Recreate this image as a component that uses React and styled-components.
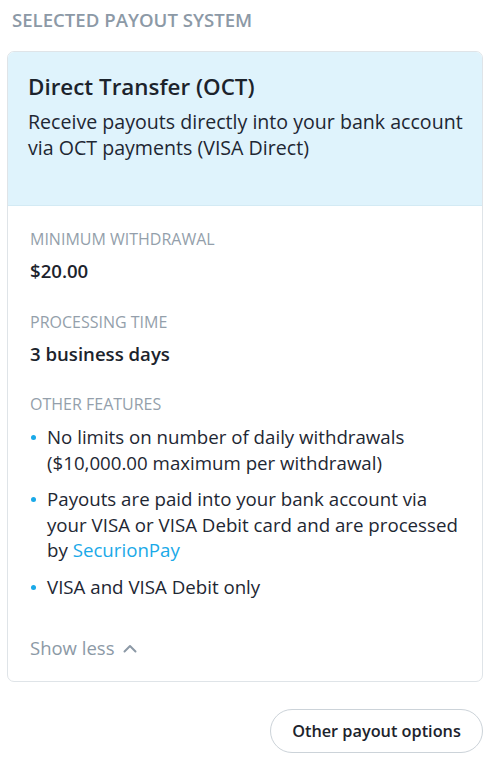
import React from 'react';
import styled, { createGlobalStyle } from 'styled-components';

const GlobalStyle = createGlobalStyle`
  body {
    margin: 0;
    background: #ffffff;
    font-family: 'Open Sans', 'Liberation Sans', sans-serif;
    color: #1e2733;
  }
`;

const Page = styled.div`
  padding: 8px 12px 8px 7px;
`;

const Heading = styled.h2`
  margin: 0 0 19px 5px;
  font-size: 18.6px;
  line-height: 24px;
  font-weight: 600;
  color: #8c99a6;
  text-transform: uppercase;
`;

const Card = styled.div`
  border: 1px solid #dfe4e8;
  border-radius: 7px;
  overflow: hidden;
`;

const CardHead = styled.div`
  background: #dff3fc;
  border-bottom: 1px solid #d3eaf4;
  padding: 20px 14px 44px 20px;
`;

const Title = styled.h3`
  margin: 0 0 7px;
  font-size: 22.4px;
  line-height: 30px;
  font-weight: 600;
  color: #1c232c;
`;

const Description = styled.p`
  margin: 0;
  font-size: 19.6px;
  line-height: 26px;
  color: #1e2733;
`;

const CardBody = styled.div`
  padding: 22px 15px 20px 22px;
`;

const Label = styled.div`
  font-size: 16px;
  line-height: 22px;
  color: #949fab;
  text-transform: uppercase;
  margin-top: ${p => (p.$first ? '0' : '26.5px')};
`;

const Value = styled.div`
  margin-top: 8px;
  font-size: 18.6px;
  line-height: 26px;
  font-weight: 600;
  color: #1c232c;
`;

const Features = styled.ul`
  list-style: none;
  margin: 9px 0 0;
  padding: 0;
  display: flex;
  flex-direction: column;
  gap: 11px;
`;

const Feature = styled.li`
  position: relative;
  padding-left: 17px;
  font-size: 18.7px;
  line-height: 25.5px;
  color: #1e2733;

  &::before {
    content: '';
    position: absolute;
    left: 1px;
    top: 11px;
    width: 5px;
    height: 5px;
    border-radius: 50%;
    background: #1aa9e8;
  }
`;

const LinkText = styled.a`
  color: #1aa9e8;
  text-decoration: none;
`;

const ShowLess = styled.button`
  margin-top: 36px;
  display: flex;
  align-items: center;
  gap: 9px;
  padding: 0;
  border: none;
  background: none;
  font-family: inherit;
  font-size: 18.5px;
  line-height: 26px;
  color: #8c99a6;
  cursor: pointer;
`;

const Footer = styled.div`
  display: flex;
  justify-content: flex-end;
  margin-top: 27px;
`;

const OptionsButton = styled.button`
  height: 44px;
  width: 213px;
  border: 1px solid #ccd3d9;
  border-radius: 22px;
  background: #ffffff;
  font-family: inherit;
  font-size: 16.3px;
  font-weight: 600;
  color: #1c232c;
  cursor: pointer;
`;

function ChevronUp() {
  return (
    <svg width="14" height="9" viewBox="0 0 14 9" fill="none">
      <path d="M1.5 7.5L7 2L12.5 7.5" stroke="#8c99a6" strokeWidth="2" strokeLinecap="round" strokeLinejoin="round" />
    </svg>
  );
}

export default function App() {
  return (
    <Page>
      <GlobalStyle />
      <Heading>Selected payout system</Heading>
      <Card>
        <CardHead>
          <Title>Direct Transfer (OCT)</Title>
          <Description>
            Receive payouts directly into your bank account via OCT payments (VISA Direct)
          </Description>
        </CardHead>
        <CardBody>
          <Label $first>Minimum withdrawal</Label>
          <Value>$20.00</Value>
          <Label>Processing time</Label>
          <Value>3 business days</Value>
          <Label>Other features</Label>
          <Features>
            <Feature>No limits on number of daily withdrawals ($10,000.00 maximum per withdrawal)</Feature>
            <Feature>
              Payouts are paid into your bank account via your VISA or VISA Debit card and are processed by{' '}
              <LinkText href="#">SecurionPay</LinkText>
            </Feature>
            <Feature>VISA and VISA Debit only</Feature>
          </Features>
          <ShowLess>
            Show less <ChevronUp />
          </ShowLess>
        </CardBody>
      </Card>
      <Footer>
        <OptionsButton>Other payout options</OptionsButton>
      </Footer>
    </Page>
  );
}
